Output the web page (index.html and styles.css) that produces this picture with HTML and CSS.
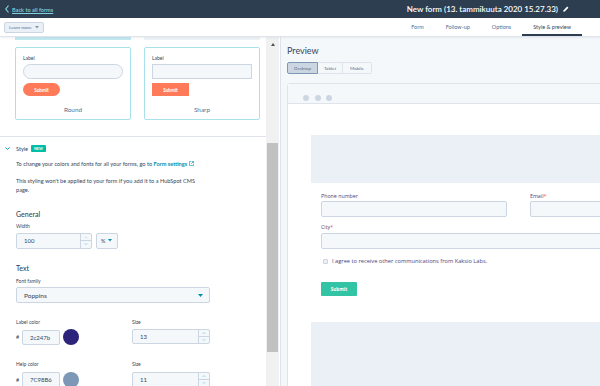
FILE: index.html
```html
<!DOCTYPE html>
<html lang="en">
<head>
    <meta charset="UTF-8">
    <meta name="viewport" content="width=device-width, initial-scale=1.0">
    <title>Style &amp; preview</title>
    <link rel="stylesheet" href="styles.css">
</head>
<body>
    <header class="topbar">
        <a class="back" href="#">
            <svg width="4" height="8" viewBox="0 0 4 8"><path d="M3.5 0.5 L0.8 4 L3.5 7.5" fill="none" stroke="#7fd1de" stroke-width="1.2"/></svg>
            <span>Back to all forms</span>
        </a>
        <div class="title">
            <span>New form (13. tammikuuta 2020 15.27.33)</span>
            <svg width="6" height="6" viewBox="0 0 6 6"><path d="M0.3 5.7 L0.6 4.2 L4.2 0.6 L5.4 1.8 L1.8 5.4 Z" fill="#fff"/></svg>
        </div>
    </header>

    <nav class="subbar">
        <button class="learn">Learn more
            <svg width="4" height="3" viewBox="0 0 4 3"><path d="M0 0 H4 L2 2.5 Z" fill="#7c98b6"/></svg>
        </button>
        <ul class="tabs">
            <li class="tab">Form</li>
            <li class="tab">Follow-up</li>
            <li class="tab">Options</li>
            <li class="tab active">Style &amp; preview</li>
        </ul>
    </nav>

    <main class="workspace">
        <section class="editor">
            <div class="editor-body">
                <div class="peek"><span class="on"></span><span></span></div>

                <!-- THEMES -->
                <div class="cards">
                    <div class="card">
                        <div class="mini-label">Label</div>
                        <div class="mini-input round"></div>
                        <div class="mini-btn round">Submit</div>
                        <div class="card-name">Round</div>
                    </div>
                    <div class="card">
                        <div class="mini-label">Label</div>
                        <div class="mini-input"></div>
                        <div class="mini-btn">Submit</div>
                        <div class="card-name">Sharp</div>
                    </div>
                </div>

                <!-- STYLE -->
                <div class="style-section">
                    <div class="style-head">
                        <svg width="5" height="3" viewBox="0 0 5 3"><path d="M0.5 0.5 L2.5 2.4 L4.5 0.5" fill="none" stroke="#0091ae" stroke-width="0.9"/></svg>
                        <span>Style</span>
                        <span class="badge">NEW</span>
                    </div>
                    <p class="note">To change your colors and fonts for all your forms, go to <a href="#">Form settings</a>
                        <svg width="5" height="5" viewBox="0 0 5 5"><path d="M2 0.5 H0.5 V4.5 H4.5 V3 M2.6 0.5 H4.5 V2.4 M4.5 0.5 L2.2 2.8" fill="none" stroke="#0091ae" stroke-width="0.6"/></svg>
                    </p>
                    <p class="note narrow">This styling won't be applied to your form if you add it to a HubSpot CMS page.</p>

                    <h3 class="group">General</h3>
                    <div class="field-label">Width</div>
                    <div class="row">
                        <div class="num wide">
                            <span class="val">100</span>
                            <span class="spin">
                                <svg width="4" height="3" viewBox="0 0 4 3"><path d="M0.5 2.5 L2 1 L3.5 2.5" fill="none" stroke="#cbd6e2" stroke-width="0.7"/></svg>
                                <svg width="4" height="3" viewBox="0 0 4 3"><path d="M0.5 0.5 L2 2 L3.5 0.5" fill="none" stroke="#7fd1de" stroke-width="0.7"/></svg>
                            </span>
                        </div>
                        <div class="unit">%
                            <svg width="4" height="3" viewBox="0 0 4 3"><path d="M0 0 H4 L2 2.5 Z" fill="#0091ae"/></svg>
                        </div>
                    </div>

                    <h3 class="group text-group">Text</h3>
                    <div class="field-label">Font family</div>
                    <div class="select">
                        <span>Poppins</span>
                        <svg width="5" height="3" viewBox="0 0 5 3"><path d="M0 0 H5 L2.5 3 Z" fill="#0091ae"/></svg>
                    </div>

                    <div class="color-grid">
                        <div class="field-label">Label color</div>
                        <div class="field-label">Size</div>
                        <div class="color-row">
                            <span class="hash">#</span>
                            <span class="hex">2c247b</span>
                            <span class="dot" style="background:#2c247b"></span>
                        </div>
                        <div class="num size">
                            <span class="val">13</span>
                            <span class="spin">
                                <svg width="4" height="3" viewBox="0 0 4 3"><path d="M0.5 2.5 L2 1 L3.5 2.5" fill="none" stroke="#7fd1de" stroke-width="0.7"/></svg>
                                <svg width="4" height="3" viewBox="0 0 4 3"><path d="M0.5 0.5 L2 2 L3.5 0.5" fill="none" stroke="#7fd1de" stroke-width="0.7"/></svg>
                            </span>
                        </div>

                        <div class="field-label gap">Help color</div>
                        <div class="field-label gap">Size</div>
                        <div class="color-row">
                            <span class="hash">#</span>
                            <span class="hex">7C98B6</span>
                            <span class="dot" style="background:#7c98b6"></span>
                        </div>
                        <div class="num size">
                            <span class="val">11</span>
                            <span class="spin">
                                <svg width="4" height="3" viewBox="0 0 4 3"><path d="M0.5 2.5 L2 1 L3.5 2.5" fill="none" stroke="#7fd1de" stroke-width="0.7"/></svg>
                                <svg width="4" height="3" viewBox="0 0 4 3"><path d="M0.5 0.5 L2 2 L3.5 0.5" fill="none" stroke="#7fd1de" stroke-width="0.7"/></svg>
                            </span>
                        </div>
                    </div>
                </div>
            </div>
            <div class="scrollbar">
                <span class="arrow"></span>
                <span class="thumb"></span>
            </div>
        </section>

        <!-- PREVIEW -->
        <section class="preview">
            <h2 class="preview-title">Preview</h2>
            <div class="devices">
                <span class="device active">Desktop</span>
                <span class="device">Tablet</span>
                <span class="device">Mobile</span>
            </div>
            <div class="frame">
                <div class="frame-bar"><i></i><i></i><i></i></div>
                <div class="page">
                    <div class="band"></div>
                    <form class="form">
                        <div class="form-row">
                            <div>
                                <label class="f-label">Phone number</label>
                                <div class="f-input"></div>
                            </div>
                            <div>
                                <label class="f-label">Email<b>*</b></label>
                                <div class="f-input"></div>
                            </div>
                        </div>
                        <label class="f-label city">City<b>*</b></label>
                        <div class="f-input full"></div>
                        <div class="consent"><span class="box"></span>I agree to receive other communications from Kaksio Labs.</div>
                        <div class="submit">Submit</div>
                    </form>
                    <div class="band bottom"></div>
                </div>
            </div>
        </section>
    </main>
</body>
</html>
```

FILE: styles.css
```css
* {
    box-sizing: border-box;
}
body {
    margin: 0;
    width: 600px;
    height: 386px;
    overflow: hidden;
    font-family: Lato, 'Open Sans', sans-serif;
    color: #33475b;
    background: #fff;
}
p, h2, h3, ul {
    margin: 0;
    padding: 0;
}
a {
    color: inherit;
}

/* top bar */
.topbar {
    height: 18px;
    background: #2d3e50;
    display: flex;
    align-items: center;
    justify-content: space-between;
    padding: 0 31px 0 5px;
}
.back {
    display: flex;
    align-items: center;
    gap: 3px;
    color: #7fd1de;
    font-size: 5.6px;
    font-weight: 600;
}
.title {
    display: flex;
    align-items: center;
    gap: 5px;
    color: #fff;
    font-size: 8px;
    font-weight: 600;
}

/* sub bar with tabs */
.subbar {
    height: 19px;
    display: flex;
    align-items: center;
    justify-content: space-between;
    padding: 0 18px 0 4px;
    border-bottom: 1px solid #dfe3eb;
    box-shadow: 0 1px 2px rgba(45, 62, 80, 0.08);
    position: relative;
}
.learn {
    height: 11px;
    display: flex;
    align-items: center;
    gap: 3px;
    padding: 0 4px;
    font-family: inherit;
    font-size: 4.6px;
    color: #506e91;
    background: #eaf0f6;
    border: 1px solid #cbd6e2;
    border-radius: 2px;
}
.tabs {
    list-style: none;
    display: flex;
    align-self: stretch;
}
.tab {
    display: flex;
    align-items: center;
    padding: 2px 11px 0;
    font-size: 5.5px;
    color: #516f90;
    border-bottom: 2px solid transparent;
}
.tab.active {
    color: #33475b;
    border-bottom-color: #2d3e50;
}

/* layout */
.workspace {
    display: flex;
    height: 349px;
}
.editor {
    width: 280px;
    display: flex;
    border-right: 1px solid #fff;
}
.editor-body {
    width: 266px;
    overflow: hidden;
}
.scrollbar {
    width: 13px;
    background: #f1f1f1;
    display: flex;
    flex-direction: column;
    align-items: center;
}
.arrow {
    margin-top: 6px;
    width: 0;
    height: 0;
    border-left: 2.5px solid transparent;
    border-right: 2.5px solid transparent;
    border-bottom: 3px solid #505050;
}
.thumb {
    margin-top: 97px;
    width: 11px;
    height: 209px;
    background: #c1c1c1;
}

/* theme cards */
.peek {
    height: 3px;
    margin: 0 8px 0 15px;
    display: grid;
    grid-template-columns: 116px 116px;
    gap: 13px;
}
.peek span {
    background: #eef3f7;
}
.peek .on {
    background: #c3e9f0;
}
.cards {
    position: relative;
    margin: 7px 8px 0 15px;
    display: grid;
    grid-template-columns: 116px 116px;
    gap: 13px;
    padding-bottom: 17px;
}
.cards::after {
    content: "";
    position: absolute;
    left: -15px;
    right: -8px;
    bottom: 0;
    border-bottom: 1px solid #dfe3eb;
}
.card {
    height: 73px;
    border: 1px solid #a9e2ec;
    border-radius: 2px;
    padding: 7px 7px 0;
}
.mini-label {
    font-size: 5px;
    line-height: 7px;
    color: #33475b;
}
.mini-input {
    margin-top: 2px;
    height: 15px;
    background: #f5f8fa;
    border: 1px solid #cbd6e2;
}
.mini-input.round {
    border-radius: 8px;
}
.mini-btn {
    margin-top: 4px;
    width: 37px;
    height: 13px;
    background: #ff7a59;
    color: #fff;
    font-size: 4.6px;
    font-weight: 700;
    display: flex;
    align-items: center;
    justify-content: center;
}
.mini-btn.round {
    border-radius: 7px;
}
.card-name {
    margin-top: 10px;
    text-align: center;
    font-size: 6.4px;
    line-height: 8px;
    color: #516f90;
}

/* style section */
.style-section {
    padding-left: 16px;
}
.style-head {
    margin: 6px 0 0 -11px;
    height: 10px;
    display: flex;
    align-items: center;
    font-size: 5.6px;
    color: #33475b;
}
.style-head svg {
    margin-right: 6px;
}
.badge {
    margin-left: 3px;
    padding: 0 3px;
    height: 7px;
    display: flex;
    align-items: center;
    background: #00bda5;
    color: #fff;
    font-size: 3.6px;
    font-weight: 700;
    border-radius: 1px;
}
.note {
    margin-top: 6px;
    font-size: 5.6px;
    line-height: 9.5px;
    color: #33475b;
}
.note a {
    color: #0091ae;
    font-weight: 700;
    text-decoration: none;
}
.note.narrow {
    margin-top: 7px;
    width: 190px;
}
.group {
    margin-top: 15px;
    font-size: 7px;
    line-height: 9px;
    font-weight: 500;
    color: #33475b;
}
.text-group {
    margin-top: 15.5px;
}
.field-label {
    margin-top: 4.5px;
    font-size: 5px;
    line-height: 7px;
    color: #33475b;
}
.row {
    margin-top: 2.5px;
    display: flex;
    gap: 4px;
}
.num {
    height: 16px;
    display: flex;
    background: #f5f8fa;
    border: 1px solid #cbd6e2;
    border-radius: 2px;
    font-size: 6px;
    color: #33475b;
}
.num .val {
    flex: 1;
    display: flex;
    align-items: center;
    padding-left: 7px;
}
.spin {
    width: 11px;
    display: flex;
    flex-direction: column;
    border-left: 1px solid #cbd6e2;
}
.spin svg {
    flex: 1;
    margin: 0 auto;
}
.spin svg + svg {
    border-top: 1px solid #cbd6e2;
    width: 100%;
    padding: 0 3px;
}
.num.wide {
    width: 76px;
}
.unit {
    width: 22px;
    height: 16px;
    display: flex;
    align-items: center;
    gap: 3px;
    padding-left: 4px;
    font-size: 5.5px;
    background: #f5f8fa;
    border: 1px solid #cbd6e2;
    border-radius: 2px;
}
.select {
    margin-top: 2.5px;
    width: 194px;
    height: 16px;
    display: flex;
    align-items: center;
    justify-content: space-between;
    padding: 0 6px 0 7px;
    font-size: 6.5px;
    background: #f5f8fa;
    border: 1px solid #cbd6e2;
    border-radius: 2px;
}
.color-grid {
    margin-top: 11px;
    display: grid;
    grid-template-columns: 116px 78px;
}
.field-label.gap {
    margin-top: 16px;
}
.color-row {
    margin-top: 3.5px;
    display: flex;
    align-items: center;
}
.hash {
    width: 6px;
    font-size: 5.5px;
}
.hex {
    width: 38px;
    height: 15px;
    display: flex;
    align-items: center;
    padding-left: 7px;
    font-size: 6px;
    background: #f5f8fa;
    border: 1px solid #cbd6e2;
    border-radius: 2px;
}
.dot {
    margin-left: 3px;
    width: 16px;
    height: 16px;
    border-radius: 50%;
}
.num.size {
    margin-top: 3.5px;
    height: 15px;
}

/* preview */
.preview {
    flex: 1;
    overflow: hidden;
    background: #f5f8fa;
    border-left: 1px solid #dfe3eb;
    padding: 8px 0 0 6px;
}
.preview-title {
    font-size: 9px;
    line-height: 11px;
    font-weight: 400;
    color: #33475b;
}
.devices {
    margin-top: 6px;
    display: flex;
}
.device {
    height: 12px;
    display: flex;
    align-items: center;
    justify-content: center;
    font-size: 4.6px;
    color: #516f90;
    background: #f5f8fa;
    border: 1px solid #dfe3eb;
    border-left: none;
}
.device:nth-child(1) {
    width: 31px;
    border-left: 1px solid #7c98b6;
    border-color: #7c98b6;
    background: #cbd6e2;
    border-radius: 2px 0 0 2px;
}
.device:nth-child(2) {
    width: 25px;
}
.device:nth-child(3) {
    width: 29px;
    border-radius: 0 2px 2px 0;
}
.frame {
    margin-top: 9px;
    width: 400px;
    border: 1px solid #dfe3eb;
    border-radius: 3px 0 0 0;
}
.frame-bar {
    height: 20px;
    padding: 11px 0 0 15px;
    display: flex;
    gap: 5.5px;
    background: #f5f8fa;
    border-bottom: 1px solid #dfe3eb;
}
.frame-bar i {
    width: 6px;
    height: 6px;
    border-radius: 50%;
    background: #cbd6e2;
}
.page {
    background: #fff;
    padding: 31px 0 0 23px;
    height: 300px;
}
.band {
    height: 48px;
    background: #eaf0f6;
}
.band.bottom {
    margin-top: 26px;
    height: 80px;
}
.form {
    padding: 10px 0 0 10px;
    font-family: 'Open Sans', Lato, sans-serif;
}
.form-row {
    display: grid;
    grid-template-columns: 186px 186px;
    gap: 23px;
}
.f-label {
    display: block;
    font-size: 5.3px;
    line-height: 7px;
    color: #4a4580;
}
.f-label b {
    color: #f2545b;
    font-weight: 400;
}
.f-label.city {
    margin-top: 7px;
}
.f-input {
    margin-top: 1px;
    height: 16px;
    background: #f5f8fa;
    border: 1px solid #cbd6e2;
    border-radius: 2px;
}
.f-input.full {
    margin-top: 2px;
    width: 400px;
}
.consent {
    margin-top: 8px;
    display: flex;
    align-items: center;
    font-size: 5.7px;
    line-height: 8px;
    color: #4a4580;
}
.box {
    margin: 0 4px 0 2px;
    width: 5px;
    height: 5px;
    background: #eaf0f6;
    border: 1px solid #cbd6e2;
    border-radius: 1px;
}
.submit {
    margin-top: 17px;
    width: 36px;
    height: 14px;
    display: flex;
    align-items: center;
    justify-content: center;
    background: #33c3a5;
    color: #fff;
    font-size: 4.6px;
    font-weight: 700;
    border-radius: 1px;
}
```
